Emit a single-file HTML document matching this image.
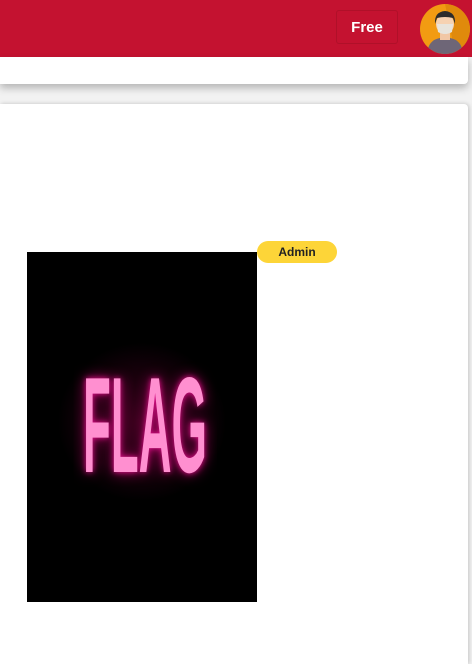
<!DOCTYPE html>
<html><head><style>
body{margin:0;width:472px;height:652px;overflow:hidden;background:#f2f2f2;font-family:"Liberation Sans",sans-serif;position:relative}
.hdr{position:absolute;left:0;top:0;width:472px;height:57px;background:#c41230}
.free{position:absolute;left:336px;top:10px;width:62px;height:34px;border:1px solid #b01029;border-radius:3px;color:#fff;font-size:15px;font-weight:bold;text-align:center;line-height:34px;box-sizing:border-box}
.av{position:absolute;left:420px;top:4px;width:50px;height:50px;border-radius:50%;background:#f29b12;overflow:hidden}
.bar{position:absolute;left:0;top:57px;width:468px;height:27px;background:#fff;border-radius:0 0 4px 0;box-shadow:0 4px 8px rgba(0,0,0,.25)}
.card{position:absolute;left:0;top:104px;width:468px;height:560px;background:#fff;border-radius:0 4px 0 0;box-shadow:1px 0 4px rgba(0,0,0,.2)}
.img{position:absolute;left:27px;top:252px;width:230px;height:350px;background:#000;overflow:hidden}
.flag{position:absolute;left:-112px;width:460px;text-align:center;color:#ff8fd0;font-weight:bold;font-size:136px;line-height:100px;top:123px;transform:scaleX(0.335);transform-origin:center;text-shadow:0 0 10px #e0108a,0 0 24px #a0005c}
.glow{position:absolute;left:30px;top:90px;width:170px;height:160px;background:radial-gradient(ellipse,rgba(120,0,60,.5),rgba(0,0,0,0) 70%)}
.badge{position:absolute;left:257px;top:241px;width:80px;height:22px;border-radius:11px;background:#fdd538;font-size:12px;font-weight:bold;text-align:center;line-height:22px;color:#222}
</style></head><body>
<div class="hdr"></div>
<div class="free">Free</div>
<div class="av"><svg width="50" height="50" viewBox="0 0 50 50">
<path d="M25 0A25 25 0 0 1 50 25 25 25 0 0 1 35 48Z" fill="#e08a0c"/>
<path d="M7 50 Q8 36 20 34 L30 34 Q42 36 43 50Z" fill="#6e6677"/>
<rect x="20" y="26" width="10" height="10" fill="#f1c7a5"/>
<ellipse cx="25" cy="20" rx="9" ry="10" fill="#f6d2b2"/>
<path d="M15 20 Q14 8 25 7 Q36 8 35 20 L33 14 Q25 12 17 14Z" fill="#2c2c2c"/>
<path d="M17 20 L33 20 L32 28 Q25 32 18 28Z" fill="#e8e4dc"/>
</svg></div>
<div class="bar"></div>
<div class="card"></div>
<div class="img"><div class="glow"></div><div class="flag">FLAG</div></div>
<div class="badge">Admin</div>
</body></html>
